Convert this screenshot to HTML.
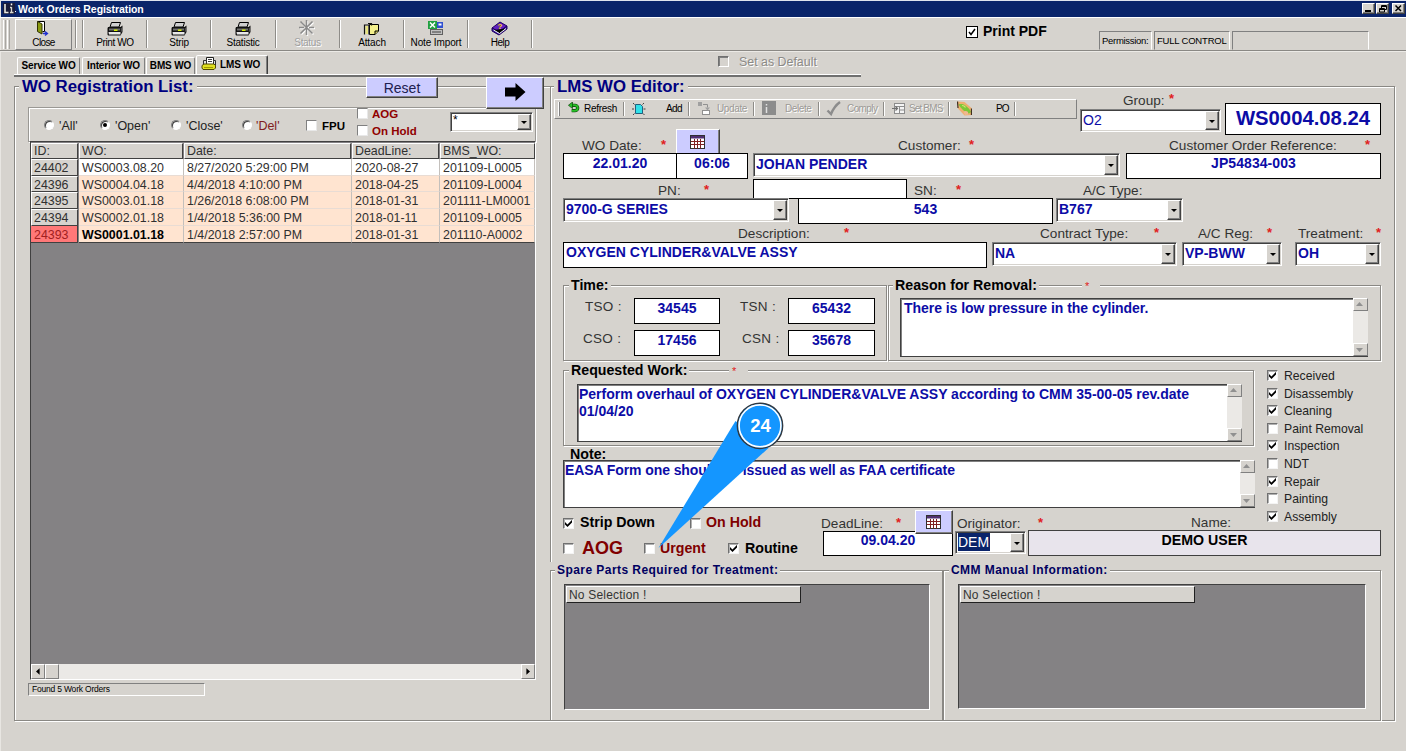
<!DOCTYPE html>
<html><head><meta charset="utf-8"><title>Work Orders Registration</title>
<style>
*{box-sizing:border-box;margin:0;padding:0}
html,body{width:1406px;height:751px;overflow:hidden;background:#d6d3ce}
body{position:relative;font-family:"Liberation Sans",Arial,sans-serif;font-size:13px;color:#000}
.a{position:absolute;white-space:nowrap}
.tah{font-family:"DejaVu Sans","Liberation Sans",sans-serif}
.sunk{background:#fff;border:1px solid;border-color:#808080 #fff #fff #808080;box-shadow:inset 1px 1px 0 #404040,inset -1px -1px 0 #d6d3ce}
.raised{border:1px solid;border-color:#fff #404040 #404040 #fff;box-shadow:inset -1px -1px 0 #808080}
.tsunk{border:1px solid;border-color:#808080 #fff #fff #808080}
.frame{border:1px solid #8a8884;box-shadow:1px 1px 0 #fff,inset 1px 1px 0 #fff}
.fld{background:#fff;border:1px solid #000;color:#0c0ca6;font-weight:bold;font-size:14px;line-height:16px}
.lbl{font-size:13.6px;line-height:15px;color:#333}
.star{color:#e02020;font-size:13px;line-height:12px;font-weight:bold}
.cb{width:11px;height:11px;background:#fff;border:1px solid;border-color:#707070 #f4f4f4 #f4f4f4 #707070;box-shadow:inset 1px 1px 0 #b0b0b0}
.cb svg{position:absolute;left:1px;top:1px}
.rb{width:10px;height:10px;border-radius:50%;background:#fff;border:1px solid;border-color:#808080 #fff #fff #808080;box-shadow:inset 1px 1px 0 #404040}
.blue{color:#0c0ca6;font-weight:bold}
.dd{position:absolute;right:1px;top:1px;bottom:1px;width:14px;background:#d6d3ce;border:1px solid;border-color:#fff #404040 #404040 #fff;box-shadow:inset -1px -1px 0 #808080}
.dd:after{content:"";position:absolute;left:3px;top:50%;margin-top:-1px;border:3px solid transparent;border-top:3px solid #000;border-bottom:0}
.combo{background:#fff;border:1px solid;border-color:#808080 #fff #fff #808080;box-shadow:inset 1px 1px 0 #404040,inset -1px -1px 0 #d6d3ce;color:#0c0ca6;font-weight:bold;font-size:14px;line-height:17px;padding-left:2px}
.lav{background:#ccccff}
.vsep{width:2px;border-left:1px solid #8e8c88;border-right:1px solid #fff}
.gt{background:#d6d3ce;font-weight:bold}
.sb{background:#ebe9e6}
.sbtn{background:#d6d3ce;border:1px solid;border-color:#fff #808080 #808080 #fff}
</style></head><body>
<div class="a " style="left:1px;top:0px;width:1405px;height:17px;background:#0a246a;border-top:1px solid #e0e4ee"></div>
<div class="a" style="left:0;top:0;width:1px;height:751px;background:#e8e6e2"></div>
<svg class="a" style="left:3px;top:2px" width="14" height="13" viewBox="0 0 14 13"><rect x="0" y="1" width="12" height="11" fill="#1a1c3a"/><path d="M2 2v8.500h3.500" stroke="#e8e8e0" stroke-width="1.600" fill="none"/><path d="M8.500 5v6M7 5.500h1.500M7 10.500h3.500" stroke="#d8d8d0" stroke-width="1.300" fill="none"/><path d="M8.500 1.500v1.800" stroke="#fff" stroke-width="1.500"/><path d="M12 9.500h1" stroke="#fff"/></svg>
<div class="a " style="left:18px;top:1.5px;color:#fff;font-weight:bold;font-size:10.500px;line-height:14px;letter-spacing:-0.08px">Work Orders Registration</div>
<div class="a " style="left:1362px;top:3px;width:13px;height:11px;background:#d6d3ce;border:1px solid;border-color:#fff #404040 #404040 #fff;box-shadow:inset -1px -1px 0 #808080"></div>
<div class="a " style="left:1376px;top:3px;width:13px;height:11px;background:#d6d3ce;border:1px solid;border-color:#fff #404040 #404040 #fff;box-shadow:inset -1px -1px 0 #808080"></div>
<div class="a " style="left:1392px;top:3px;width:13px;height:11px;background:#d6d3ce;border:1px solid;border-color:#fff #404040 #404040 #fff;box-shadow:inset -1px -1px 0 #808080"></div>
<svg class="a" style="left:1362px;top:3px" width="43" height="11" viewBox="0 0 43 11"><path d="M3 8h6" stroke="#000" stroke-width="2"/><path d="M19.500 2.500h5v4h-5zM19.500 3.500h5" stroke="#000" fill="none"/><path d="M17.500 5.500h5v3.500h-5zM17.500 6.500h5" stroke="#000" fill="#d6d3ce"/><path d="M33.500 2.500l5.500 5.500M39 2.500l-5.500 5.500" stroke="#000" stroke-width="1.500"/></svg>
<div class="a " style="left:0px;top:17px;width:1406px;height:34px;border-top:1px solid #fff;border-bottom:1px solid #8a8884"></div>
<div class="a " style="left:0px;top:51px;width:1406px;height:1px;background:#eceae6"></div>
<div class="a " style="left:3px;top:20px;width:3px;height:29px;border-left:1px solid #fff;border-right:1px solid #a8a6a2"></div>
<div class="a " style="left:7px;top:20px;width:3px;height:29px;border-left:1px solid #fff;border-right:1px solid #a8a6a2"></div>
<div class="a " style="left:15px;top:19px;width:57px;height:31px;border:1px solid;border-color:#fff #808080 #808080 #fff"></div>
<div class="a vsep" style="left:75px;top:20px;width:2px;height:28px;"></div>
<div class="a vsep" style="left:82px;top:20px;width:2px;height:28px;"></div>
<div class="a vsep" style="left:146px;top:20px;width:2px;height:28px;"></div>
<div class="a vsep" style="left:210px;top:20px;width:2px;height:28px;"></div>
<div class="a vsep" style="left:275px;top:20px;width:2px;height:28px;"></div>
<div class="a vsep" style="left:339px;top:20px;width:2px;height:28px;"></div>
<div class="a vsep" style="left:403px;top:20px;width:2px;height:28px;"></div>
<div class="a vsep" style="left:467px;top:20px;width:2px;height:28px;"></div>
<div class="a vsep" style="left:531px;top:20px;width:2px;height:28px;"></div>
<div class="a " style="left:15px;top:37px;width:57px;text-align:center;font-size:10px;line-height:12px;letter-spacing:-0.66px;color:#000">Close</div>
<div class="a " style="left:83px;top:37px;width:64px;text-align:center;font-size:10px;line-height:12px;letter-spacing:-0.39px;color:#000">Print WO</div>
<div class="a " style="left:147px;top:37px;width:64px;text-align:center;font-size:10px;line-height:12px;letter-spacing:-0.2px;color:#000">Strip</div>
<div class="a " style="left:211px;top:37px;width:64px;text-align:center;font-size:10px;line-height:12px;letter-spacing:-0.22px;color:#000">Statistic</div>
<div class="a " style="left:275px;top:37px;width:65px;text-align:center;font-size:10px;line-height:12px;letter-spacing:-0.32px;color:#a0a0a0;text-shadow:1px 1px 0 #fff">Status</div>
<div class="a " style="left:340px;top:37px;width:64px;text-align:center;font-size:10px;line-height:12px;letter-spacing:-0.1px;color:#000">Attach</div>
<div class="a " style="left:404px;top:37px;width:64px;text-align:center;font-size:10px;line-height:12px;letter-spacing:-0.12px;color:#000">Note Import</div>
<div class="a " style="left:468px;top:37px;width:64px;text-align:center;font-size:10px;line-height:12px;letter-spacing:-0.5px;color:#000">Help</div>
<svg class="a" style="left:107px;top:22px" width="16" height="14" viewBox="0 0 16 14"><path d="M4.500 0.500h9l-1.500 4.500h-9z" fill="#d0d0d0" stroke="#000"/><path d="M1 5h12.500l2-1.500v6.500l-2 3.500h-11.500c-1 0-1.500-.5-1.500-1.500v-5.500z" fill="#101010"/><rect x="2" y="6.500" width="11" height="2" fill="#707070"/><rect x="7" y="7.500" width="3.500" height="1.500" fill="#d8f000"/><path d="M1.500 10h12v2.500h-11.500z" fill="#e8e8e8"/><path d="M13.800 6.500l1-1v3.500l-1 1.800z" fill="#606060"/></svg>
<svg class="a" style="left:171px;top:22px" width="16" height="14" viewBox="0 0 16 14"><path d="M4.500 0.500h9l-1.500 4.500h-9z" fill="#d0d0d0" stroke="#000"/><path d="M1 5h12.500l2-1.500v6.500l-2 3.500h-11.500c-1 0-1.500-.5-1.500-1.500v-5.500z" fill="#101010"/><rect x="2" y="6.500" width="11" height="2" fill="#707070"/><rect x="7" y="7.500" width="3.500" height="1.500" fill="#d8f000"/><path d="M1.500 10h12v2.500h-11.500z" fill="#e8e8e8"/><path d="M13.800 6.500l1-1v3.500l-1 1.800z" fill="#606060"/></svg>
<svg class="a" style="left:235px;top:22px" width="16" height="14" viewBox="0 0 16 14"><path d="M4.500 0.500h9l-1.500 4.500h-9z" fill="#d0d0d0" stroke="#000"/><path d="M1 5h12.500l2-1.500v6.500l-2 3.500h-11.500c-1 0-1.500-.5-1.500-1.500v-5.500z" fill="#101010"/><rect x="2" y="6.500" width="11" height="2" fill="#707070"/><rect x="7" y="7.500" width="3.500" height="1.500" fill="#d8f000"/><path d="M1.500 10h12v2.500h-11.500z" fill="#e8e8e8"/><path d="M13.800 6.500l1-1v3.500l-1 1.800z" fill="#606060"/></svg>
<svg class="a" style="left:34px;top:20px" width="16" height="16" viewBox="0 0 16 16"><path d="M3.500 1.500h7v10h-2" fill="#fff" stroke="#000"/><path d="M3.500 1.500l4.500 2.500v10l-4.500-2.500z" fill="#8a9a10" stroke="#303000"/><path d="M9 13.500h4M11 11.500l2.500 2-2.500 2" stroke="#2030d0" stroke-width="1.300" fill="none"/></svg>
<svg class="a" style="left:299px;top:20px" width="17" height="17" viewBox="0 0 17 17"><g transform="translate(1,1)" stroke="#fff" stroke-width="1.400" fill="none"><path d="M7.500 0v15M0 7.500h5M10 7.500h5M1.500 1.500l12 12M13.500 1.500l-12 12"/></g><g stroke="#8a8a8a" stroke-width="1.500" fill="none"><path d="M7.500 0v15M0 7.500h5M10 7.500h5M1.500 1.500l12 12M13.500 1.500l-12 12"/></g></svg>
<svg class="a" style="left:363px;top:21px" width="17" height="16" viewBox="0 0 17 16"><path d="M6.500 3.500h9v6.500l-3.500 3.500h-5.500z" fill="#f4f08c" stroke="#000"/><path d="M15.500 10h-3.500v3.500" fill="#d0cc60" stroke="#000"/><path d="M1.500 13.500v-9.500h4.500v9.500M3.500 12v-6.500M5 2.500h3.500v2" fill="none" stroke="#101010" stroke-width="1.200"/><path d="M2.500 5h2.500v8h-2.500z" fill="#e8e480"/></svg>
<svg class="a" style="left:427px;top:20px" width="17" height="16" viewBox="0 0 17 16"><rect x="1" y="1" width="9" height="8" fill="#20a040"/><path d="M3 2.500l5 5M8 2.500l-5 5" stroke="#fff" stroke-width="1.500"/><rect x="10" y="2" width="6" height="6" fill="#3050d0"/><rect x="11.500" y="3.500" width="3" height="2" fill="#fff"/><rect x="3.500" y="9.500" width="12" height="5" fill="#c0c0c0" stroke="#606060"/><path d="M5 12h9" stroke="#404040"/></svg>
<svg class="a" style="left:491px;top:20px" width="17" height="16" viewBox="0 0 17 16"><path d="M1 8l8-6 7 4-8 6z" fill="#6020c0" stroke="#200060"/><path d="M1 8v3l7 4 8-6v-3l-8 6z" fill="#3010a0" stroke="#200060"/><path d="M2.500 10l6 3.500 6.500-5" stroke="#fff" stroke-width="1"/><text x="6.500" y="9" font-size="8" font-weight="bold" fill="#ffe000" font-family="Liberation Sans,sans-serif">?</text></svg>
<div class="a" style="left:966px;top:26px;width:12px;height:12px;border:1px solid #000;background:#fff"><svg class="a" style="left:1px;top:1px" width="8" height="8" viewBox="0 0 8 8"><path d="M1 4l2 2.500 4-5.500" stroke="#000" stroke-width="1.500" fill="none"/></svg></div>
<div class="a " style="left:983px;top:23px;font-weight:bold;font-size:14px;line-height:16px">Print PDF</div>
<div class="a " style="left:1099px;top:31px;width:53px;height:19px;border:1px solid;border-color:#808080 #fff transparent #808080"></div>
<div class="a " style="left:1154px;top:31px;width:76px;height:19px;border:1px solid;border-color:#808080 #fff transparent #808080"></div>
<div class="a " style="left:1232px;top:31px;width:137px;height:19px;border:1px solid;border-color:#808080 #fff transparent #808080"></div>
<div class="a " style="left:1102px;top:35px;font-size:9.5px;line-height:12px;letter-spacing:-0.3px">Permission:</div>
<div class="a " style="left:1157px;top:35px;font-size:9.5px;line-height:12px;letter-spacing:-0.2px">FULL CONTROL</div>
<div class="a " style="left:17px;top:57px;width:63px;height:18px;border:1px solid;border-color:#fff #808080 transparent #fff;border-radius:2px 2px 0 0"></div>
<div class="a " style="left:17px;top:60px;width:63px;text-align:center;font-weight:bold;font-size:10px;line-height:12px;letter-spacing:-0.15px">Service WO</div>
<div class="a " style="left:82px;top:57px;width:63px;height:18px;border:1px solid;border-color:#fff #808080 transparent #fff;border-radius:2px 2px 0 0"></div>
<div class="a " style="left:82px;top:60px;width:63px;text-align:center;font-weight:bold;font-size:10px;line-height:12px;letter-spacing:-0.15px">Interior WO</div>
<div class="a " style="left:146px;top:57px;width:49px;height:18px;border:1px solid;border-color:#fff #808080 transparent #fff;border-radius:2px 2px 0 0"></div>
<div class="a " style="left:146px;top:60px;width:49px;text-align:center;font-weight:bold;font-size:10px;line-height:12px;letter-spacing:-0.15px">BMS WO</div>
<div class="a " style="left:196px;top:55px;width:72px;height:20px;background:#d6d3ce;border:1px solid;border-color:#fff #404040 transparent #fff;border-radius:2px 2px 0 0;box-shadow:inset -1px 0 0 #808080"></div>
<div class="a " style="left:14px;top:74px;width:847px;height:3px;background:#707070;border-top:1px solid #fff"></div>
<div class="a " style="left:220px;top:58.5px;font-weight:bold;font-size:10px;line-height:12px;letter-spacing:-0.15px">LMS WO</div>
<svg class="a" style="left:201px;top:57px" width="15" height="13" viewBox="0 0 15 13"><path d="M5.500 0.500h7v7h-7z" fill="#fff" stroke="#202020"/><path d="M7 2.500h4M7 4.500h4" stroke="#404040"/><path d="M2.500 3.500h3v4h-3zM12.500 3.500h2v6" fill="#e0e0e0" stroke="#303030"/><path d="M1 8.500l2-1.500h10l1.500 1.500v2.500l-1.500 1.500h-11l-1-1.500z" fill="#e0e020" stroke="#504800"/><path d="M3 10.500h9" stroke="#a09800"/></svg>
<div class="a" style="left:718px;top:56px;width:11px;height:11px;border:1px solid;border-color:#707070 #fff #fff #707070;box-shadow:inset 1px 1px 0 #808080;background:#d6d3ce"></div>
<div class="a " style="left:740px;top:57px;font-size:12.400px;line-height:13px;color:#fff">Set as Default</div>
<div class="a " style="left:739px;top:56px;font-size:12.400px;line-height:13px;color:#8c8a86">Set as Default</div>
<div class="a frame" style="left:14px;top:86px;width:536px;height:635px;border-right:0"></div>
<div class="a gt" style="left:19px;top:77px;padding:0 3px;font-size:16.8px;line-height:19px;color:#000080">WO Registration List:</div>
<div class="a raised lav" style="left:366px;top:77px;width:72px;height:21px;"></div>
<div class="a " style="left:366px;top:80px;width:72px;text-align:center;font-size:14px;line-height:16px;color:#202050">Reset</div>
<div class="a frame" style="left:28px;top:107px;width:508px;height:35px;border-color:#9a9894"></div>
<div class="a rb" style="left:44px;top:120px"></div>
<div class="a " style="left:59px;top:119px;font-size:12.5px;line-height:14px;color:#222">'All'</div>
<div class="a rb" style="left:100px;top:120px"><div class="a" style="left:2px;top:2px;width:4px;height:4px;border-radius:50%;background:#000"></div></div>
<div class="a " style="left:115px;top:119px;font-size:12.5px;line-height:14px;color:#222">'Open'</div>
<div class="a rb" style="left:171px;top:120px"></div>
<div class="a " style="left:186px;top:119px;font-size:12.5px;line-height:14px;color:#222">'Close'</div>
<div class="a rb" style="left:242px;top:120px"></div>
<div class="a " style="left:256px;top:119px;font-size:12.5px;line-height:14px;color:#222;color:#802020">'Del'</div>
<div class="a" style="left:306px;top:120px;width:11px;height:11px;background:#fff;border:1px solid;border-color:#808080 #e8e8e8 #e8e8e8 #808080"></div>
<div class="a " style="left:322px;top:119px;font-weight:bold;font-size:11.5px;line-height:14px">FPU</div>
<div class="a" style="left:357px;top:108px;width:11px;height:11px;background:#fff;border:1px solid;border-color:#808080 #e8e8e8 #e8e8e8 #808080"></div>
<div class="a " style="left:372px;top:107px;font-weight:bold;font-size:11.5px;line-height:14px;color:#900000">AOG</div>
<div class="a" style="left:357px;top:125px;width:11px;height:11px;background:#fff;border:1px solid;border-color:#808080 #e8e8e8 #e8e8e8 #808080"></div>
<div class="a " style="left:372px;top:124px;font-weight:bold;font-size:11.5px;line-height:14px;color:#900000">On Hold</div>
<div class="a combo" style="left:450px;top:112px;width:83px;height:20px;color:#000;font-weight:normal;font-size:12px;line-height:14px">*<div class="dd"></div></div>
<div class="a raised lav" style="left:486px;top:77px;width:58px;height:32px;"></div>
<svg class="a" style="left:505px;top:83px" width="21" height="18" viewBox="0 0 21 18"><path d="M0 4.500h10.500v-4.500l10 9-10 9v-4.500h-10.500z" fill="#000"/></svg>
<div class="a " style="left:30px;top:141px;width:506px;height:539px;background:#848284;border:1px solid;border-color:#404040 #fff #fff #404040"></div>
<div class="a " style="left:31px;top:143px;width:47px;height:16px;background:#d6d3ce;border-bottom:1px solid #404040;border-right:1px solid #404040;border-top:1px solid #fff;border-left:1px solid #fff"></div>
<div class="a " style="left:34px;top:144px;font-size:12.4px;line-height:15px;color:#303030">ID:</div>
<div class="a " style="left:79px;top:143px;width:104px;height:16px;background:#d6d3ce;border-bottom:1px solid #404040;border-right:1px solid #404040;border-top:1px solid #fff;border-left:1px solid #fff"></div>
<div class="a " style="left:82px;top:144px;font-size:12.4px;line-height:15px;color:#303030">WO:</div>
<div class="a " style="left:184px;top:143px;width:167px;height:16px;background:#d6d3ce;border-bottom:1px solid #404040;border-right:1px solid #404040;border-top:1px solid #fff;border-left:1px solid #fff"></div>
<div class="a " style="left:187px;top:144px;font-size:12.4px;line-height:15px;color:#303030">Date:</div>
<div class="a " style="left:352px;top:143px;width:87px;height:16px;background:#d6d3ce;border-bottom:1px solid #404040;border-right:1px solid #404040;border-top:1px solid #fff;border-left:1px solid #fff"></div>
<div class="a " style="left:355px;top:144px;font-size:12.4px;line-height:15px;color:#303030">DeadLine:</div>
<div class="a " style="left:440px;top:143px;width:95px;height:16px;background:#d6d3ce;border-bottom:1px solid #404040;border-right:1px solid #404040;border-top:1px solid #fff;border-left:1px solid #fff"></div>
<div class="a " style="left:443px;top:144px;font-size:12.4px;line-height:15px;color:#303030">BMS_WO:</div>
<div class="a " style="left:31px;top:159px;width:47px;height:17px;background:#d6d3ce;border-bottom:1px solid #404040;border-right:1px solid #404040;border-top:1px solid #fff;border-left:1px solid #fff"></div>
<div class="a " style="left:34px;top:161px;font-size:12.4px;line-height:15px;color:#303030">24402</div>
<div class="a " style="left:79px;top:159px;width:105px;height:17px;background:#fff;border-bottom:1px solid #e8dcd4;border-right:1px solid #c4c0bc"></div>
<div class="a " style="left:82px;top:161px;font-size:12.4px;line-height:15px;color:#303030">WS0003.08.20</div>
<div class="a " style="left:184px;top:159px;width:168px;height:17px;background:#fff;border-bottom:1px solid #e8dcd4;border-right:1px solid #c4c0bc"></div>
<div class="a " style="left:187px;top:161px;font-size:12.4px;line-height:15px;color:#303030">8/27/2020 5:29:00 PM</div>
<div class="a " style="left:352px;top:159px;width:88px;height:17px;background:#fff;border-bottom:1px solid #e8dcd4;border-right:1px solid #c4c0bc"></div>
<div class="a " style="left:355px;top:161px;font-size:12.4px;line-height:15px;color:#303030">2020-08-27</div>
<div class="a " style="left:440px;top:159px;width:95px;height:17px;background:#fff;border-bottom:1px solid #e8dcd4;border-right:1px solid #c4c0bc"></div>
<div class="a " style="left:443px;top:161px;font-size:12.4px;line-height:15px;color:#303030">201109-L0005</div>
<div class="a " style="left:31px;top:176px;width:47px;height:16px;background:#d6d3ce;border-bottom:1px solid #404040;border-right:1px solid #404040;border-top:1px solid #fff;border-left:1px solid #fff"></div>
<div class="a " style="left:34px;top:178px;font-size:12.4px;line-height:15px;color:#303030">24396</div>
<div class="a " style="left:79px;top:176px;width:105px;height:16px;background:#ffe4d0;border-bottom:1px solid #e8dcd4;border-right:1px solid #c4c0bc"></div>
<div class="a " style="left:82px;top:178px;font-size:12.4px;line-height:15px;color:#303030">WS0004.04.18</div>
<div class="a " style="left:184px;top:176px;width:168px;height:16px;background:#ffe4d0;border-bottom:1px solid #e8dcd4;border-right:1px solid #c4c0bc"></div>
<div class="a " style="left:187px;top:178px;font-size:12.4px;line-height:15px;color:#303030">4/4/2018 4:10:00 PM</div>
<div class="a " style="left:352px;top:176px;width:88px;height:16px;background:#ffe4d0;border-bottom:1px solid #e8dcd4;border-right:1px solid #c4c0bc"></div>
<div class="a " style="left:355px;top:178px;font-size:12.4px;line-height:15px;color:#303030">2018-04-25</div>
<div class="a " style="left:440px;top:176px;width:95px;height:16px;background:#ffe4d0;border-bottom:1px solid #e8dcd4;border-right:1px solid #c4c0bc"></div>
<div class="a " style="left:443px;top:178px;font-size:12.4px;line-height:15px;color:#303030">201109-L0004</div>
<div class="a " style="left:31px;top:192px;width:47px;height:17px;background:#d6d3ce;border-bottom:1px solid #404040;border-right:1px solid #404040;border-top:1px solid #fff;border-left:1px solid #fff"></div>
<div class="a " style="left:34px;top:194px;font-size:12.4px;line-height:15px;color:#303030">24395</div>
<div class="a " style="left:79px;top:192px;width:105px;height:17px;background:#ffe4d0;border-bottom:1px solid #e8dcd4;border-right:1px solid #c4c0bc"></div>
<div class="a " style="left:82px;top:194px;font-size:12.4px;line-height:15px;color:#303030">WS0003.01.18</div>
<div class="a " style="left:184px;top:192px;width:168px;height:17px;background:#ffe4d0;border-bottom:1px solid #e8dcd4;border-right:1px solid #c4c0bc"></div>
<div class="a " style="left:187px;top:194px;font-size:12.4px;line-height:15px;color:#303030">1/26/2018 6:08:00 PM</div>
<div class="a " style="left:352px;top:192px;width:88px;height:17px;background:#ffe4d0;border-bottom:1px solid #e8dcd4;border-right:1px solid #c4c0bc"></div>
<div class="a " style="left:355px;top:194px;font-size:12.4px;line-height:15px;color:#303030">2018-01-31</div>
<div class="a " style="left:440px;top:192px;width:95px;height:17px;background:#ffe4d0;border-bottom:1px solid #e8dcd4;border-right:1px solid #c4c0bc"></div>
<div class="a " style="left:443px;top:194px;font-size:12.4px;line-height:15px;color:#303030">201111-LM0001</div>
<div class="a " style="left:31px;top:209px;width:47px;height:17px;background:#d6d3ce;border-bottom:1px solid #404040;border-right:1px solid #404040;border-top:1px solid #fff;border-left:1px solid #fff"></div>
<div class="a " style="left:34px;top:211px;font-size:12.4px;line-height:15px;color:#303030">24394</div>
<div class="a " style="left:79px;top:209px;width:105px;height:17px;background:#ffe4d0;border-bottom:1px solid #e8dcd4;border-right:1px solid #c4c0bc"></div>
<div class="a " style="left:82px;top:211px;font-size:12.4px;line-height:15px;color:#303030">WS0002.01.18</div>
<div class="a " style="left:184px;top:209px;width:168px;height:17px;background:#ffe4d0;border-bottom:1px solid #e8dcd4;border-right:1px solid #c4c0bc"></div>
<div class="a " style="left:187px;top:211px;font-size:12.4px;line-height:15px;color:#303030">1/4/2018 5:36:00 PM</div>
<div class="a " style="left:352px;top:209px;width:88px;height:17px;background:#ffe4d0;border-bottom:1px solid #e8dcd4;border-right:1px solid #c4c0bc"></div>
<div class="a " style="left:355px;top:211px;font-size:12.4px;line-height:15px;color:#303030">2018-01-11</div>
<div class="a " style="left:440px;top:209px;width:95px;height:17px;background:#ffe4d0;border-bottom:1px solid #e8dcd4;border-right:1px solid #c4c0bc"></div>
<div class="a " style="left:443px;top:211px;font-size:12.4px;line-height:15px;color:#303030">201109-L0005</div>
<div class="a " style="left:31px;top:226px;width:47px;height:17px;background:#ff7878;border-bottom:1px solid #404040;border-right:1px solid #404040"></div>
<div class="a " style="left:34px;top:228px;font-size:12.4px;line-height:15px;color:#303030;color:#a02020">24393</div>
<div class="a " style="left:79px;top:226px;width:105px;height:17px;background:#ffe4d0;border-bottom:1px solid #e8dcd4;border-right:1px solid #c4c0bc;border-bottom:1px solid #404040"></div>
<div class="a " style="left:82px;top:228px;font-size:12.4px;line-height:15px;color:#303030;font-weight:bold;color:#000">WS0001.01.18</div>
<div class="a " style="left:184px;top:226px;width:168px;height:17px;background:#ffe4d0;border-bottom:1px solid #e8dcd4;border-right:1px solid #c4c0bc;border-bottom:1px solid #404040"></div>
<div class="a " style="left:187px;top:228px;font-size:12.4px;line-height:15px;color:#303030">1/4/2018 2:57:00 PM</div>
<div class="a " style="left:352px;top:226px;width:88px;height:17px;background:#ffe4d0;border-bottom:1px solid #e8dcd4;border-right:1px solid #c4c0bc;border-bottom:1px solid #404040"></div>
<div class="a " style="left:355px;top:228px;font-size:12.4px;line-height:15px;color:#303030">2018-01-31</div>
<div class="a " style="left:440px;top:226px;width:95px;height:17px;background:#ffe4d0;border-bottom:1px solid #e8dcd4;border-right:1px solid #c4c0bc;border-bottom:1px solid #404040"></div>
<div class="a " style="left:443px;top:228px;font-size:12.4px;line-height:15px;color:#303030">201110-A0002</div>
<div class="a sb" style="left:31px;top:664px;width:504px;height:15px;"></div>
<div class="a sbtn" style="left:31px;top:664px;width:14px;height:15px;"></div>
<div class="a sbtn" style="left:45px;top:664px;width:14px;height:15px;"></div>
<div class="a sbtn" style="left:521px;top:664px;width:14px;height:15px;"></div>
<svg class="a" style="left:36px;top:668px" width="4" height="7" viewBox="0 0 5 8"><path d="M4.500 0v8l-4.500-4z"/></svg>
<svg class="a" style="left:526px;top:668px" width="4" height="7" viewBox="0 0 5 8"><path d="M0.500 0v8l4.500-4z"/></svg>
<div class="a tsunk" style="left:28px;top:683px;width:177px;height:13px;"></div>
<div class="a " style="left:32px;top:684px;font-size:8.500px;line-height:10px;letter-spacing:-0.2px">Found 5 Work Orders</div>
<div class="a frame" style="left:550px;top:86px;width:845px;height:635px;"></div>
<div class="a gt" style="left:554px;top:77px;padding:0 3px;font-size:16.8px;line-height:19px;color:#000080">LMS WO Editor:</div>
<div class="a " style="left:554px;top:99px;width:523px;height:20px;border:1px solid;border-color:#fff #808080 #808080 #fff"></div>
<div class="a " style="left:558px;top:102px;width:2px;height:14px;border-left:1px solid #fff;border-right:1px solid #808080"></div>
<div class="a vsep" style="left:623px;top:102px;width:2px;height:14px;"></div>
<div class="a vsep" style="left:688px;top:102px;width:2px;height:14px;"></div>
<div class="a vsep" style="left:753px;top:102px;width:2px;height:14px;"></div>
<div class="a vsep" style="left:818px;top:102px;width:2px;height:14px;"></div>
<div class="a vsep" style="left:883px;top:102px;width:2px;height:14px;"></div>
<div class="a vsep" style="left:948px;top:102px;width:2px;height:14px;"></div>
<div class="a vsep" style="left:1014px;top:102px;width:2px;height:14px;"></div>
<div class="a " style="left:584px;top:103px;font-size:10px;line-height:12px;letter-spacing:-0.29px">Refresh</div>
<div class="a " style="left:666px;top:103px;font-size:10px;line-height:12px;letter-spacing:-0.6px">Add</div>
<div class="a " style="left:718px;top:104px;font-size:10px;line-height:12px;letter-spacing:-0.37px;color:#fff">Update</div>
<div class="a " style="left:717px;top:103px;font-size:10px;line-height:12px;letter-spacing:-0.37px;color:#9c9a96">Update</div>
<div class="a " style="left:786px;top:104px;font-size:10px;line-height:12px;letter-spacing:-0.4px;color:#fff">Delete</div>
<div class="a " style="left:785px;top:103px;font-size:10px;line-height:12px;letter-spacing:-0.4px;color:#9c9a96">Delete</div>
<div class="a " style="left:848px;top:104px;font-size:10px;line-height:12px;letter-spacing:-0.58px;color:#fff">Comply</div>
<div class="a " style="left:847px;top:103px;font-size:10px;line-height:12px;letter-spacing:-0.58px;color:#9c9a96">Comply</div>
<div class="a " style="left:910px;top:104px;font-size:10px;line-height:12px;letter-spacing:-0.86px;color:#fff">Set BMS</div>
<div class="a " style="left:909px;top:103px;font-size:10px;line-height:12px;letter-spacing:-0.86px;color:#9c9a96">Set BMS</div>
<div class="a " style="left:996px;top:103px;font-size:10px;line-height:12px;letter-spacing:-1px">PO</div>
<svg class="a" style="left:568px;top:102px" width="11.5" height="12.3" viewBox="0 0 14 15"><g fill="none" stroke-linecap="butt"><path d="M4 4h4.500a3.300 3.300 0 0 1 0 6.600h-4" stroke="#083808" stroke-width="4"/><path d="M4 4h4.500a3.300 3.300 0 0 1 0 6.600h-4" stroke="#28c028" stroke-width="2.400"/></g><path d="M5.500 0l-5 4 5 4z" fill="#28c028" stroke="#083808" stroke-width=".8"/></svg>
<svg class="a" style="left:632px;top:102px" width="14" height="14" viewBox="0 0 14 14"><path d="M3.500 2.500h5l2 2v7h-7z" fill="#30e0e8" stroke="#206080"/><path d="M1 1l1.500 1.500M12 1l-1.500 1.500M1 13l1.500-1.500M12.500 13l-1.500-1.500M0 7h2M11.500 7h2" stroke="#404040"/></svg>
<svg class="a" style="left:697px;top:101px" width="14" height="15" viewBox="0 0 14 15"><rect x="1" y="1" width="4" height="4" fill="#a0a0a0"/><path d="M6 3.500h4.500v3" stroke="#909090" fill="none"/><rect x="5.500" y="9.500" width="7" height="4" fill="#fff" stroke="#909090"/><path d="M8 6.500h5l-2.500 3z" fill="#a0a0a0"/></svg>
<svg class="a" style="left:762px;top:101px" width="15" height="15" viewBox="0 0 15 15"><rect x="0" y="0" width="14" height="14" fill="#8c8c8c"/><path d="M4.500 3v1.500M4.500 6v6" stroke="#e0e0e0" stroke-width="1.500"/></svg>
<svg class="a" style="left:826px;top:101px" width="16" height="15" viewBox="0 0 16 15"><path d="M1.500 9.500l3.500 3.500c2-5 5-9 9-12" stroke="#8c8c8c" stroke-width="2.400" fill="none"/></svg>
<svg class="a" style="left:892px;top:102px" width="13" height="13" viewBox="0 0 13 13"><rect x="2.500" y="1.500" width="10" height="10" fill="#f4f4f4" stroke="#8c8c8c"/><path d="M2.500 4.500h10M7.500 4.500v7M7.500 8h5" stroke="#8c8c8c"/><path d="M0 6.500h5M3.500 4.500l2 2-2 2" stroke="#707070" stroke-width="1.200" fill="none"/></svg>
<svg class="a" style="left:957px;top:101px" width="15" height="15" viewBox="0 0 15 15"><path d="M0.500 0.500l7 0.500 7 6v7l-7 0.500-6.500-7z" fill="#eeb070"/><path d="M1.500 3.500c3-1 5-0.500 7.500 1.500s4 3.500 5 6l-2 1.500c-2-0.500-4-1.500-6-3.500s-3.500-3.500-4.500-6z" fill="#7cc838"/><path d="M5 4.500c1.500 0 3 1 3.500 2" stroke="#d8e070" stroke-width="1.200" fill="none"/><path d="M6.500 11c1-1.500 3-1.500 4.500 0v2.500l-3 0.500z" fill="#f0b890"/><path d="M0.500 0.500l0.500 6.500" stroke="#403020" stroke-width="1.200"/><path d="M14.500 7.500v6.500" stroke="#403020" stroke-width="1.300"/></svg>
<div class="a lbl" style="left:1123px;top:93px;">Group:</div>
<div class="a star" style="left:1169px;top:93px;">*</div>
<div class="a combo" style="left:1080px;top:109px;width:141px;height:23px;line-height:20px;padding-left:2px;font-weight:normal">O2<div class="dd"></div></div>
<div class="a fld" style="left:1225px;top:103px;width:156px;height:32px;border-width:1px"></div>
<div class="a blue" style="left:1225px;top:106px;width:156px;text-align:center;font-size:20.3px;line-height:24px">WS0004.08.24</div>
<div class="a lbl" style="left:582px;top:138px;">WO Date:</div>
<div class="a star" style="left:661px;top:139px;">*</div>
<div class="a raised lav" style="left:676px;top:129px;width:44px;height:26px;"></div>
<svg class="a" style="left:690px;top:135px" width="15" height="14" viewBox="0 0 15 14"><rect x="0.500" y="0.500" width="14" height="13" fill="#fff" stroke="#303030"/><rect x="1" y="1" width="13" height="2.500" fill="#503070"/><path d="M1 6.500h13M1 9.500h13M4.500 4v9.500M7.500 4v9.500M10.500 4v9.500" stroke="#802020" stroke-width="1"/></svg>
<div class="a fld" style="left:563px;top:153px;width:114px;height:26px;"></div>
<div class="a blue" style="left:563px;top:155px;width:114px;text-align:center;font-size:14px;line-height:16px">22.01.20</div>
<div class="a fld" style="left:676px;top:153px;width:72px;height:26px;"></div>
<div class="a blue" style="left:676px;top:155px;width:72px;text-align:center;font-size:14px;line-height:16px">06:06</div>
<div class="a combo" style="left:753px;top:153px;width:367px;height:24px;font-size:14px;line-height:20px">JOHAN PENDER<div class="dd"></div></div>
<div class="a lbl" style="left:898px;top:138px;">Customer:</div>
<div class="a star" style="left:969px;top:139px;">*</div>
<div class="a lbl" style="left:1169px;top:138px;">Customer Order Reference:</div>
<div class="a star" style="left:1365px;top:139px;">*</div>
<div class="a fld" style="left:1126px;top:153px;width:255px;height:26px;"></div>
<div class="a blue" style="left:1126px;top:155px;width:255px;text-align:center;font-size:14px;line-height:16px;letter-spacing:0.07px">JP54834-003</div>
<div class="a lbl" style="left:658px;top:183px;">PN:</div>
<div class="a star" style="left:704px;top:184px;">*</div>
<div class="a fld" style="left:753px;top:179px;width:154px;height:20px;"></div>
<div class="a lbl" style="left:914px;top:183px;">SN:</div>
<div class="a star" style="left:956px;top:184px;">*</div>
<div class="a combo" style="left:563px;top:198px;width:226px;height:24px;font-size:14px;line-height:20px">9700-G SERIES<div class="dd"></div></div>
<div class="a fld" style="left:798px;top:198px;width:255px;height:26px;"></div>
<div class="a blue" style="left:798px;top:200.5px;width:255px;text-align:center;font-size:14px;line-height:16px">543</div>
<div class="a lbl" style="left:1083px;top:183px;">A/C Type:</div>
<div class="a combo" style="left:1056px;top:198px;width:127px;height:24px;font-size:14px;line-height:20px">B767<div class="dd"></div></div>
<div class="a lbl" style="left:738px;top:226px;">Description:</div>
<div class="a star" style="left:844px;top:227px;">*</div>
<div class="a fld" style="left:563px;top:242px;width:424px;height:26px;"></div>
<div class="a blue" style="left:566px;top:244px;font-size:14px;line-height:16px">OXYGEN CYLINDER&amp;VALVE ASSY</div>
<div class="a lbl" style="left:1040px;top:226px;">Contract Type:</div>
<div class="a star" style="left:1154px;top:227px;">*</div>
<div class="a combo" style="left:992px;top:242px;width:185px;height:24px;font-size:14px;line-height:21px">NA<div class="dd"></div></div>
<div class="a lbl" style="left:1198px;top:226px;">A/C Reg:</div>
<div class="a star" style="left:1267px;top:227px;">*</div>
<div class="a combo" style="left:1182px;top:242px;width:100px;height:24px;font-size:14px;line-height:21px">VP-BWW<div class="dd"></div></div>
<div class="a lbl" style="left:1298px;top:226px;">Treatment:</div>
<div class="a star" style="left:1376px;top:227px;">*</div>
<div class="a combo" style="left:1295px;top:242px;width:86px;height:24px;font-size:14px;line-height:21px">OH<div class="dd"></div></div>
<div class="a frame" style="left:563px;top:285px;width:324px;height:76px;"></div>
<div class="a gt" style="left:569px;top:277px;padding:0 2px;font-weight:bold;font-size:14.2px;line-height:16px">Time:</div>
<div class="a " style="left:585px;top:299px;font-size:13.5px;line-height:15px;color:#333;letter-spacing:0.3px">TSO :</div>
<div class="a fld" style="left:634px;top:298px;width:86px;height:26px;"></div>
<div class="a blue" style="left:634px;top:300px;width:86px;text-align:center;font-size:14px;line-height:16px">34545</div>
<div class="a " style="left:740px;top:299px;font-size:13.5px;line-height:15px;color:#333;letter-spacing:0.3px">TSN :</div>
<div class="a fld" style="left:788px;top:298px;width:87px;height:26px;"></div>
<div class="a blue" style="left:788px;top:300px;width:87px;text-align:center;font-size:14px;line-height:16px">65432</div>
<div class="a " style="left:583px;top:331px;font-size:13.5px;line-height:15px;color:#333;letter-spacing:0.3px">CSO :</div>
<div class="a fld" style="left:634px;top:330px;width:86px;height:26px;"></div>
<div class="a blue" style="left:634px;top:332px;width:86px;text-align:center;font-size:14px;line-height:16px">17456</div>
<div class="a " style="left:742px;top:331px;font-size:13.5px;line-height:15px;color:#333;letter-spacing:0.3px">CSN :</div>
<div class="a fld" style="left:788px;top:330px;width:87px;height:26px;"></div>
<div class="a blue" style="left:788px;top:332px;width:87px;text-align:center;font-size:14px;line-height:16px">35678</div>
<div class="a frame" style="left:888px;top:285px;width:493px;height:76px;"></div>
<div class="a gt" style="left:893px;top:277px;padding:0 2px;font-weight:bold;font-size:14.2px;line-height:16px">Reason for Removal:</div>
<div class="a gt" style="left:1082px;top:280px;width:18px;height:12px;"></div>
<div class="a star" style="left:1085px;top:280px;font-size:11px;font-weight:normal">*</div>
<div class="a fld" style="left:900px;top:298px;width:468px;height:59px;border-color:#404040;box-shadow:inset 1px 1px 0 #808080"></div>
<div class="a blue" style="left:904px;top:300px;font-size:14px;line-height:16px;letter-spacing:-0.04px">There is low pressure in the cylinder.</div>
<div class="a sb" style="left:1353px;top:298px;width:15px;height:58px;"></div>
<div class="a sbtn" style="left:1353px;top:298px;width:15px;height:13px;"></div>
<div class="a sbtn" style="left:1353px;top:343px;width:15px;height:13px;"></div>
<svg class="a" style="left:1356px;top:302px" width="7" height="4" viewBox="0 0 7 4"><path d="M0 4h7l-3.500-4z" fill="#909090"/></svg>
<svg class="a" style="left:1356px;top:348px" width="7" height="4" viewBox="0 0 7 4"><path d="M0 0h7l-3.500 4z" fill="#909090"/></svg>
<div class="a frame" style="left:563px;top:370px;width:691px;height:76px;"></div>
<div class="a gt" style="left:569px;top:362px;padding:0 2px;font-weight:bold;font-size:14.2px;line-height:16px">Requested Work:</div>
<div class="a gt" style="left:729px;top:365px;width:19px;height:12px;"></div>
<div class="a star" style="left:732px;top:365px;font-size:11px;font-weight:normal">*</div>
<div class="a fld" style="left:577px;top:384px;width:665px;height:58px;border-color:#404040;box-shadow:inset 1px 1px 0 #808080"></div>
<div class="a blue" style="left:579px;top:386px;font-size:14px;line-height:16px">Perform overhaul of OXYGEN CYLINDER&amp;VALVE ASSY according to CMM 35-00-05 rev.date</div>
<div class="a blue" style="left:579px;top:403px;font-size:14px;line-height:16px">01/04/20</div>
<div class="a sb" style="left:1227px;top:384px;width:15px;height:57px;"></div>
<div class="a sbtn" style="left:1227px;top:384px;width:15px;height:13px;"></div>
<div class="a sbtn" style="left:1227px;top:428px;width:15px;height:13px;"></div>
<svg class="a" style="left:1230px;top:388px" width="7" height="4" viewBox="0 0 7 4"><path d="M0 4h7l-3.500-4z" fill="#909090"/></svg>
<svg class="a" style="left:1230px;top:433px" width="7" height="4" viewBox="0 0 7 4"><path d="M0 0h7l-3.500 4z" fill="#909090"/></svg>
<div class="a " style="left:570px;top:446px;font-weight:bold;font-size:14.2px;line-height:16px">Note:</div>
<div class="a fld" style="left:563px;top:460px;width:692px;height:48px;border-color:#404040;box-shadow:inset 1px 1px 0 #808080"></div>
<div class="a blue" style="left:565px;top:462px;font-size:14px;line-height:16px;letter-spacing:-0.09px">EASA Form one should be issued as well as FAA certificate</div>
<div class="a sb" style="left:1240px;top:460px;width:15px;height:47px;"></div>
<div class="a sbtn" style="left:1240px;top:460px;width:15px;height:13px;"></div>
<div class="a sbtn" style="left:1240px;top:494px;width:15px;height:13px;"></div>
<svg class="a" style="left:1243px;top:464px" width="7" height="4" viewBox="0 0 7 4"><path d="M0 4h7l-3.500-4z" fill="#909090"/></svg>
<svg class="a" style="left:1243px;top:499px" width="7" height="4" viewBox="0 0 7 4"><path d="M0 0h7l-3.500 4z" fill="#909090"/></svg>
<div class="a cb" style="left:563px;top:518px"><svg width="7" height="7" viewBox="0 0 7 7"><path d="M0 2v2.600l2.500 2.400 4.500-4.500v-2.600l-4.500 4.500z" fill="#000"/></svg></div>
<div class="a " style="left:580px;top:514px;font-weight:bold;font-size:14.2px;line-height:16px">Strip Down</div>
<div class="a cb" style="left:690px;top:518px"></div>
<div class="a " style="left:706px;top:514px;font-weight:bold;font-size:14.2px;line-height:16px;color:#800000">On Hold</div>
<div class="a cb" style="left:563px;top:543px"></div>
<div class="a " style="left:582px;top:537px;font-weight:bold;font-size:18px;line-height:22px;color:#800000">AOG</div>
<div class="a cb" style="left:644px;top:543px"></div>
<div class="a " style="left:660px;top:540px;font-weight:bold;font-size:14.2px;line-height:16px;color:#800000">Urgent</div>
<div class="a cb" style="left:728px;top:543px"><svg width="7" height="7" viewBox="0 0 7 7"><path d="M0 2v2.600l2.500 2.400 4.500-4.500v-2.600l-4.500 4.500z" fill="#000"/></svg></div>
<div class="a " style="left:745px;top:540px;font-weight:bold;font-size:14.2px;line-height:16px">Routine</div>
<div class="a lbl" style="left:821px;top:516px;">DeadLine:</div>
<div class="a star" style="left:896px;top:517px;">*</div>
<div class="a fld" style="left:823px;top:531px;width:130px;height:25px;"></div>
<div class="a blue" style="left:823px;top:532px;width:130px;text-align:center;font-size:14px;line-height:16px">09.04.20</div>
<div class="a raised lav" style="left:915px;top:510px;width:38px;height:24px;"></div>
<svg class="a" style="left:926px;top:515px" width="15" height="14" viewBox="0 0 15 14"><rect x="0.500" y="0.500" width="14" height="13" fill="#fff" stroke="#303030"/><rect x="1" y="1" width="13" height="2.500" fill="#503070"/><path d="M1 6.500h13M1 9.500h13M4.500 4v9.500M7.500 4v9.500M10.500 4v9.500" stroke="#802020" stroke-width="1"/></svg>
<div class="a lbl" style="left:957px;top:516px;">Originator:</div>
<div class="a star" style="left:1038px;top:517px;">*</div>
<div class="a combo" style="left:955px;top:531px;width:71px;height:23px;font-size:14px;line-height:21px;font-weight:normal;padding-left:2px"><span style="background:#0a246a;color:#fff;padding:1px 1px 1px 0">DEM</span><div class="dd"></div></div>
<div class="a lbl" style="left:1191px;top:515px;">Name:</div>
<div class="a fld" style="left:1028px;top:530px;width:353px;height:26px;background:#e8e4ec;border-color:#404040"></div>
<div class="a " style="left:1028px;top:532px;width:353px;text-align:center;font-weight:bold;font-size:14.2px;line-height:16px;color:#000">DEMO USER</div>
<div class="a" style="left:1267px;top:370px;width:11px;height:11px;background:#fff;border:1px solid;border-color:#707070 #f4f4f4 #f4f4f4 #707070;box-shadow:inset 1px 1px 0 #b0b0b0"><svg class="a" style="left:1px;top:1px" width="7" height="7" viewBox="0 0 7 7"><path d="M0 2v2.600l2.500 2.400 4.500-4.500v-2.600l-4.500 4.500z" fill="#000"/></svg></div>
<div class="a " style="left:1284px;top:369px;font-size:12.2px;line-height:14px;color:#222">Received</div>
<div class="a" style="left:1267px;top:388px;width:11px;height:11px;background:#fff;border:1px solid;border-color:#707070 #f4f4f4 #f4f4f4 #707070;box-shadow:inset 1px 1px 0 #b0b0b0"><svg class="a" style="left:1px;top:1px" width="7" height="7" viewBox="0 0 7 7"><path d="M0 2v2.600l2.500 2.400 4.500-4.500v-2.600l-4.500 4.500z" fill="#000"/></svg></div>
<div class="a " style="left:1284px;top:387px;font-size:12.2px;line-height:14px;color:#222">Disassembly</div>
<div class="a" style="left:1267px;top:405px;width:11px;height:11px;background:#fff;border:1px solid;border-color:#707070 #f4f4f4 #f4f4f4 #707070;box-shadow:inset 1px 1px 0 #b0b0b0"><svg class="a" style="left:1px;top:1px" width="7" height="7" viewBox="0 0 7 7"><path d="M0 2v2.600l2.500 2.400 4.500-4.500v-2.600l-4.500 4.500z" fill="#000"/></svg></div>
<div class="a " style="left:1284px;top:404px;font-size:12.2px;line-height:14px;color:#222">Cleaning</div>
<div class="a" style="left:1267px;top:423px;width:11px;height:11px;background:#fff;border:1px solid;border-color:#707070 #f4f4f4 #f4f4f4 #707070;box-shadow:inset 1px 1px 0 #b0b0b0"></div>
<div class="a " style="left:1284px;top:422px;font-size:12.2px;line-height:14px;color:#222">Paint Removal</div>
<div class="a" style="left:1267px;top:440px;width:11px;height:11px;background:#fff;border:1px solid;border-color:#707070 #f4f4f4 #f4f4f4 #707070;box-shadow:inset 1px 1px 0 #b0b0b0"><svg class="a" style="left:1px;top:1px" width="7" height="7" viewBox="0 0 7 7"><path d="M0 2v2.600l2.500 2.400 4.500-4.500v-2.600l-4.500 4.500z" fill="#000"/></svg></div>
<div class="a " style="left:1284px;top:439px;font-size:12.2px;line-height:14px;color:#222">Inspection</div>
<div class="a" style="left:1267px;top:458px;width:11px;height:11px;background:#fff;border:1px solid;border-color:#707070 #f4f4f4 #f4f4f4 #707070;box-shadow:inset 1px 1px 0 #b0b0b0"></div>
<div class="a " style="left:1284px;top:457px;font-size:12.2px;line-height:14px;color:#222">NDT</div>
<div class="a" style="left:1267px;top:476px;width:11px;height:11px;background:#fff;border:1px solid;border-color:#707070 #f4f4f4 #f4f4f4 #707070;box-shadow:inset 1px 1px 0 #b0b0b0"><svg class="a" style="left:1px;top:1px" width="7" height="7" viewBox="0 0 7 7"><path d="M0 2v2.600l2.500 2.400 4.500-4.500v-2.600l-4.500 4.500z" fill="#000"/></svg></div>
<div class="a " style="left:1284px;top:475px;font-size:12.2px;line-height:14px;color:#222">Repair</div>
<div class="a" style="left:1267px;top:493px;width:11px;height:11px;background:#fff;border:1px solid;border-color:#707070 #f4f4f4 #f4f4f4 #707070;box-shadow:inset 1px 1px 0 #b0b0b0"></div>
<div class="a " style="left:1284px;top:492px;font-size:12.2px;line-height:14px;color:#222">Painting</div>
<div class="a" style="left:1267px;top:511px;width:11px;height:11px;background:#fff;border:1px solid;border-color:#707070 #f4f4f4 #f4f4f4 #707070;box-shadow:inset 1px 1px 0 #b0b0b0"><svg class="a" style="left:1px;top:1px" width="7" height="7" viewBox="0 0 7 7"><path d="M0 2v2.600l2.500 2.400 4.500-4.500v-2.600l-4.500 4.500z" fill="#000"/></svg></div>
<div class="a " style="left:1284px;top:510px;font-size:12.2px;line-height:14px;color:#222">Assembly</div>
<div class="a " style="left:549px;top:562px;width:4px;height:9px;background:#d6d3ce"></div>
<div class="a frame" style="left:550px;top:570px;width:393px;height:151px;"></div>
<div class="a gt" style="left:555px;top:564px;padding:0 2px;font-size:12px;line-height:13px;color:#000060;letter-spacing:0.44px">Spare Parts Required for Treatment:</div>
<div class="a " style="left:564px;top:584px;width:366px;height:126px;background:#848284;border:1px solid;border-color:#404040 #fff #fff #404040"></div>
<div class="a " style="left:566px;top:586px;width:235px;height:17px;background:#d6d3ce;border:1px solid;border-color:#fff #202020 #202020 #fff"></div>
<div class="a " style="left:569px;top:588px;font-size:12px;line-height:14px;color:#333;letter-spacing:0.2px">No Selection !</div>
<div class="a frame" style="left:943px;top:570px;width:438px;height:151px;"></div>
<div class="a gt" style="left:949px;top:564px;padding:0 2px;font-size:12px;line-height:13px;color:#000060;letter-spacing:0.44px">CMM Manual Information:</div>
<div class="a " style="left:958px;top:584px;width:408px;height:125px;background:#848284;border:1px solid;border-color:#404040 #fff #fff #404040"></div>
<div class="a " style="left:960px;top:586px;width:235px;height:17px;background:#d6d3ce;border:1px solid;border-color:#fff #202020 #202020 #fff"></div>
<div class="a " style="left:963px;top:588px;font-size:12px;line-height:14px;color:#333;letter-spacing:0.2px">No Selection !</div>
<svg class="a" style="left:640px;top:395px" width="160" height="165" viewBox="640 395 160 165"><path d="M658.500 548L735.500 421L768.500 448z" fill="#1496ff"/><circle cx="760" cy="425.800" r="22.600" fill="#1496ff" stroke="#303840" stroke-width="1.500"/><circle cx="760" cy="425.800" r="20.900" fill="none" stroke="#fff" stroke-width="1.600"/><text x="760.500" y="432.300" text-anchor="middle" font-family="Liberation Sans,sans-serif" font-weight="bold" font-size="18.500" fill="#fff">24</text></svg>
</body></html>
